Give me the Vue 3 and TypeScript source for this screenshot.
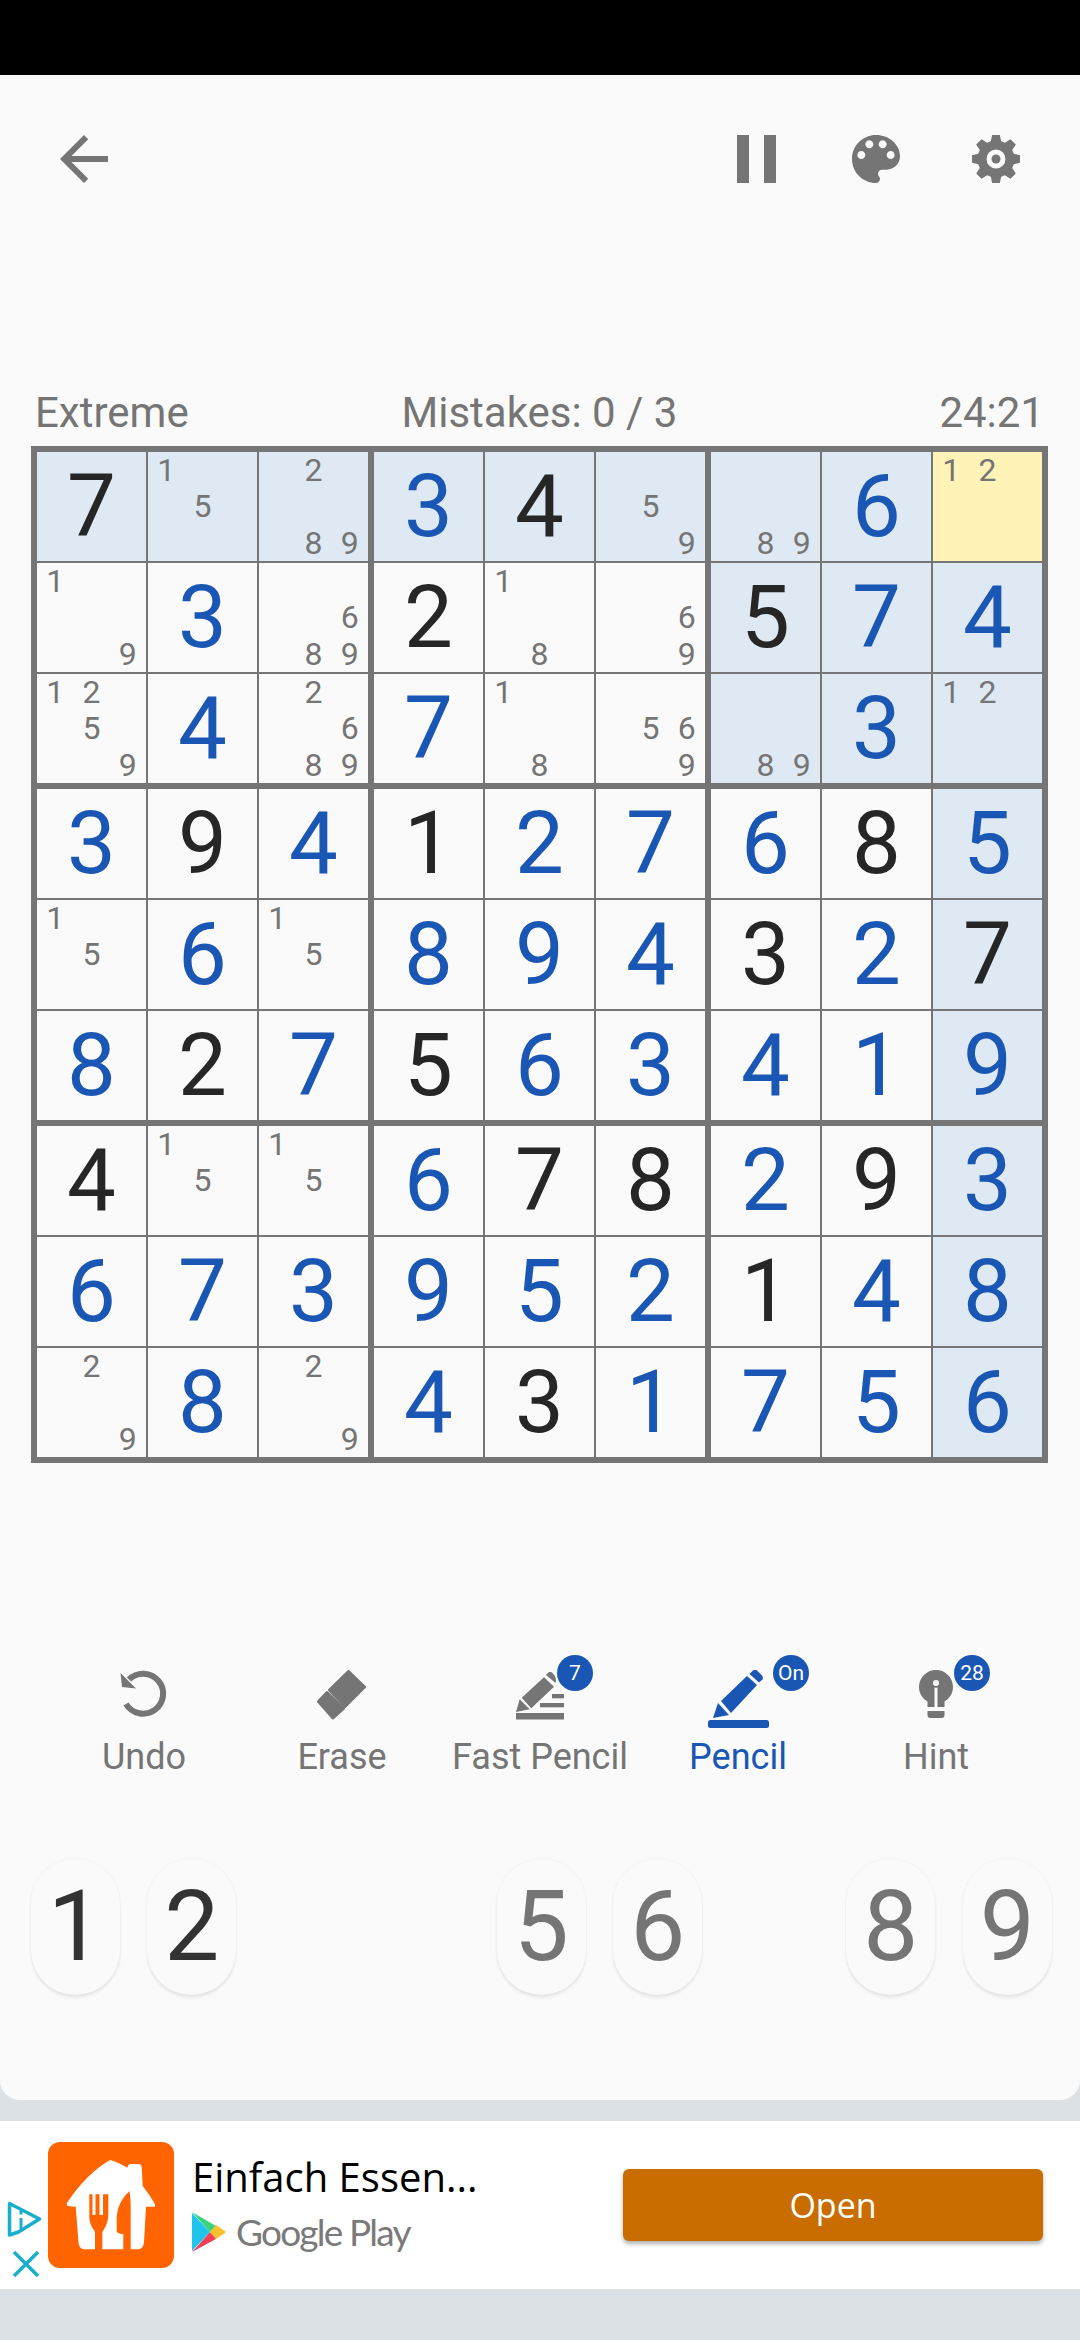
<script setup lang="ts">
const rows: (number | string | number[])[][] = [
  ['7', [1, 5], [2, 8, 9], 3, '4', [5, 9], [8, 9], 6, [1, 2]],
  [[1, 9], 3, [6, 8, 9], '2', [1, 8], [6, 9], '5', 7, 4],
  [[1, 2, 5, 9], 4, [2, 6, 8, 9], 7, [1, 8], [5, 6, 9], [8, 9], 3, [1, 2]],
  [3, '9', 4, '1', 2, 7, 6, '8', 5],
  [[1, 5], 6, [1, 5], 8, 9, 4, '3', 2, '7'],
  [8, '2', 7, '5', 6, 3, 4, 1, 9],
  ['4', [1, 5], [1, 5], 6, '7', '8', 2, '9', 3],
  [6, 7, 3, 9, 5, 2, '1', 4, 8],
  [[2, 9], 8, [2, 9], 4, '3', 1, 7, 5, 6],
]

function highlighted(r: number, c: number): boolean {
  return r < 3 ? c >= 6 || r === 0 : c === 8
}

const cells = rows.flatMap((row, r) =>
  row.map((v, c) => ({
    key: `${r}-${c}`,
    notes: Array.isArray(v) ? v : null,
    text: Array.isArray(v) ? '' : String(v),
    given: typeof v === 'string',
    hl: highlighted(r, c),
    selected: r === 0 && c === 8,
    thickRight: c === 2 || c === 5,
    thickBottom: r === 2 || r === 5,
    lastCol: c === 8,
    lastRow: r === 8,
  })),
)

const pad = [
  { n: 1, state: 'done' },
  { n: 2, state: 'done' },
  { n: 3, state: 'none' },
  { n: 4, state: 'none' },
  { n: 5, state: 'left' },
  { n: 6, state: 'left' },
  { n: 7, state: 'none' },
  { n: 8, state: 'left' },
  { n: 9, state: 'left' },
]

function gear(): string {
  const pts: string[] = []
  const n = 8
  for (let i = 0; i < n; i++) {
    const a = (i * 2 * Math.PI) / n - Math.PI / 2
    const step = (2 * Math.PI) / n
    const add = (r: number, d: number) =>
      pts.push(`${(24 + r * Math.cos(a + d)).toFixed(2)},${(24 + r * Math.sin(a + d)).toFixed(2)}`)
    add(18.5, -0.36 * step)
    add(24.5, -0.2 * step)
    add(24.5, 0.2 * step)
    add(18.5, 0.36 * step)
  }
  return pts.join(' ')
}
const gearPoints = gear()
</script>

<template>
  <div class="page">
    <div class="status"></div>
    <main class="game">
      <header class="top">
        <svg class="ic-back" viewBox="4 4 16 16"><path d="M20 11H7.83l5.59-5.59L12 4l-8 8 8 8 1.41-1.41L7.83 13H20v-2z" /></svg>
        <div class="top-right">
          <svg class="ic-pause" viewBox="0 0 39 48"><rect width="12" height="48" /><rect x="27" width="12" height="48" /></svg>
          <svg class="ic-sq" viewBox="3 3 18 18"><path d="M12 3c-4.97 0-9 4.03-9 9s4.03 9 9 9c.83 0 1.5-.67 1.5-1.5 0-.39-.15-.74-.39-1.01-.23-.26-.38-.61-.38-.99 0-.83.67-1.5 1.5-1.5H16c2.76 0 5-2.24 5-5 0-4.42-4.03-8-9-8zm-5.5 9c-.83 0-1.5-.67-1.5-1.5S5.67 9 6.5 9 8 9.67 8 10.5 7.33 12 6.5 12zm3-4C8.67 8 8 7.33 8 6.5S8.67 5 9.5 5s1.5.67 1.5 1.5S10.33 8 9.5 8zm5 0c-.83 0-1.5-.67-1.5-1.5S13.67 5 14.5 5s1.5.67 1.5 1.5S15.33 8 14.5 8zm3 4c-.83 0-1.5-.67-1.5-1.5S16.67 9 17.5 9s1.5.67 1.5 1.5-.67 1.5-1.5 1.5z" /></svg>
          <svg class="ic-sq" viewBox="0 0 48 48"><polygon :points="gearPoints" /><circle cx="24" cy="24" r="9.500" fill="#fafafa" /><circle cx="24" cy="24" r="4.500" /></svg>
        </div>
      </header>

      <div class="info">
        <span>Extreme</span>
        <span class="mistakes">Mistakes: 0 / 3</span>
        <span class="timer">24:21</span>
      </div>

      <div class="board">
        <div
          v-for="cell in cells"
          :key="cell.key"
          class="cell"
          :class="{ hl: cell.hl, sel: cell.selected, tr: cell.thickRight, tb: cell.thickBottom, lc: cell.lastCol, lr: cell.lastRow }"
        >
          <div v-if="cell.notes" class="notes">
            <span v-for="n in 9" :key="n">{{ cell.notes.includes(n) ? n : '' }}</span>
          </div>
          <span v-else class="val" :class="{ given: cell.given }">{{ cell.text }}</span>
        </div>
      </div>

      <div class="tools">
        <div class="tool">
          <div class="tool-icon">
            <svg width="48" height="50" viewBox="0 0 48 50" class="gray">
              <path d="M9 9.500A20 20 0 1 1 6 34" fill="none" stroke-width="6" class="st" />
              <polygon points="0.5,3 2,17 16,18.500" />
            </svg>
          </div>
          <span>Undo</span>
        </div>
        <div class="tool">
          <div class="tool-icon">
            <svg width="50" height="50" viewBox="0 0 50 50" class="gray">
              <polygon points="31.500,1.500 47.500,17 28,36.500 12.500,20" class="rj" />
              <polygon points="10,22.500 26.500,38.500 16,48 1.500,31.500" class="rj" />
            </svg>
          </div>
          <span>Erase</span>
        </div>
        <div class="tool">
          <div class="tool-icon">
            <svg class="fast gray" width="48" height="48" viewBox="0 0 48 48">
              <polygon points="0,40 3.700,27.300 13.700,37.300" />
              <polygon points="5.700,25.700 28,5.300 38,14.700 15.300,36.300" />
              <path d="M30 3l3-3q2-.5 3.500 1l2.500 3q1.500 3 .5 7z" />
              <rect x="0" y="41" width="48" height="6.500" />
              <rect x="36" y="22" width="12" height="4.300" />
              <rect x="24" y="31" width="24" height="4.300" />
            </svg>
            <i class="badge b-fast">7</i>
          </div>
          <span>Fast Pencil</span>
        </div>
        <div class="tool active">
          <div class="tool-icon">
            <svg width="61" height="58" viewBox="0 0 61 58">
              <polygon points="5,48 10,33 21,45" />
              <polygon points="13,31 39,6 49,15 23,43" />
              <path d="M41.500 4l3.500-3.500q2-1.500 4 0l5 5q1.500 2 .5 4l-3.500 3z" />
              <rect x="0" y="50" width="61" height="8" rx="2.500" />
            </svg>
            <i class="badge b-pencil">On</i>
          </div>
          <span>Pencil</span>
        </div>
        <div class="tool">
          <div class="tool-icon">
            <svg width="34" height="48" viewBox="0 0 34 48" class="gray">
              <path fill-rule="evenodd" d="M17 0C7.600 0 0 7.600 0 17c0 6.500 3.500 11.500 8.500 14.500V37h7V17.500a3.500 3.500 0 0 0 3 0V37h7v-5.500C30.500 28.500 34 23.500 34 17 34 7.600 26.400 0 17 0zm0 10a3 3 0 1 1 0 6 3 3 0 0 1 0-6z" />
              <path d="M8.500 41h17v4q0 3-3 3h-11q-3 0-3-3z" />
            </svg>
            <i class="badge b-hint">28</i>
          </div>
          <span>Hint</span>
        </div>
      </div>

      <div class="pad">
        <div v-for="p in pad" :key="p.n" class="slot">
          <button v-if="p.state !== 'none'" class="key" :class="p.state">{{ p.n }}</button>
        </div>
      </div>
    </main>

    <aside class="ad">
      <div class="ad-marks">
        <svg width="36" height="38" viewBox="0 0 36 38" fill="none" stroke="#19aecb" stroke-width="3.500">
          <path d="M2.500 2.500l30 15.500-21 13-9 3z" stroke-linejoin="round" />
          <path d="M14 17v11M14 10v3.500" stroke-width="3" />
        </svg>
        <svg class="x" width="28" height="28" viewBox="0 0 28 28" fill="none" stroke="#19aecb" stroke-width="3.500">
          <path d="M2 2l24 24M26 2L2 26" />
        </svg>
      </div>
      <div class="logo">
        <svg width="126" height="126" viewBox="0 0 126 126">
          <path fill="#fff" d="M62 18Q70 20 79.300 25.700L80.300 23Q81 22 83 22L91 22.300Q93.700 22.500 93.700 25L94.700 44Q102 53 107 62.300L107 64.700 98 64.700 96 100Q95.500 107.300 90 107.300L36 107.300Q31 107.300 30.500 100L27.700 64.700 19.300 64 18.700 61.300Q38 32 62 18Z" />
          <path fill="#ff6400" d="M41.300 52.300L60.300 52.300 60.300 74Q60 82 54.300 90L54.300 108 47 108 47 90Q41.500 82 41.300 76Z" />
          <path fill="#fff" d="M44.500 51h3v22h-3zM51.500 51h3.500v22h-3.500z" />
          <path fill="#ff6400" d="M81.300 49Q82.700 55 82.700 65L82.700 108 75.300 108 75.300 92.300Q68.700 91.500 68.700 89L68.700 74Q70 60 81.300 49Z" />
        </svg>
      </div>
      <div class="ad-text">
        <div class="ad-title">Einfach Essen...</div>
        <div class="gp">
          <svg width="34" height="42" viewBox="0 0 34 42">
            <path fill="#1fc4ef" d="M0 2v38l18-19z" />
            <path fill="#3bd37f" d="M0 1l24 14-6 6z" />
            <path fill="#fbc02d" d="M24 14l9 6q1 1 0 2l-9 6-6-7z" />
            <path fill="#ef4259" d="M0 41l24-13-6-7z" />
          </svg>
          <span>Google Play</span>
        </div>
      </div>
      <div class="open-btn">Open</div>
    </aside>
  </div>
</template>

<style>
html, body { margin: 0; background: #dce1e5; }
</style>

<style scoped>
.page {
  width: 1080px;
  height: 2340px;
  display: flex;
  flex-direction: column;
  overflow: hidden;
  background: #dce1e5;
  font-family: Roboto, sans-serif;
}
.status { height: 75px; background: #000; flex: none; }
.game {
  height: 2025px;
  flex: none;
  background: #fafafa;
  border-radius: 0 0 20px 20px;
  padding: 60px 0 0;
  box-sizing: border-box;
}
.top {
  height: 48px;
  display: flex;
  justify-content: space-between;
  padding: 0 60px 0 60px;
  fill: #757575;
}
.top svg { display: block; height: 48px; }
.ic-back { width: 48px; }
.ic-pause { width: 39px; margin-right: 4px; }
.ic-sq { width: 48px; }
.top-right { display: flex; gap: 72px; align-items: center; }
.info {
  margin-top: 201px;
  padding: 0 36px 0 35px;
  height: 56px;
  display: grid;
  grid-template-columns: 1fr auto 1fr;
  align-items: center;
  font-size: 42px;
  color: #757575;
}
.timer { text-align: right; }
.board {
  margin: 6px 0 0 31px;
  width: 1017px;
  height: 1017px;
  box-sizing: border-box;
  border: 6px solid #757575;
  background: #757575;
  display: grid;
  grid-template-columns: repeat(9, auto);
  grid-template-rows: repeat(9, auto);
}
.cell {
  background: #fafafa;
  width: 109px;
  height: 109px;
  margin: 0 2px 2px 0;
  display: flex;
  align-items: center;
  justify-content: center;
  position: relative;
}
.cell.tr { margin-right: 6px; }
.cell.tb { margin-bottom: 6px; }
.cell.lc { margin-right: 0; }
.cell.lr { margin-bottom: 0; }
.cell.hl { background: #dfe9f3; }
.cell.sel { background: #fff3b8; }
.val { font-size: 87px; line-height: 1; color: #1a56b4; }
.val.given { color: #262626; }
.notes {
  position: absolute;
  inset: 0;
  display: grid;
  grid-template-columns: repeat(3, 1fr);
  grid-template-rows: repeat(3, 1fr);
  font-size: 32px;
  color: #757575;
  text-align: center;
  line-height: 36px;
}
.tools {
  margin-top: 207px;
  padding: 0 45px;
  display: grid;
  grid-template-columns: repeat(5, 198px);
}
.tool {
  display: flex;
  flex-direction: column;
  align-items: center;
  color: #757575;
  font-size: 36px;
  line-height: 40px;
}
.tool.active { color: #1a56b4; fill: #1a56b4; }
.tool-icon {
  position: relative;
  height: 58px;
  margin-bottom: 9px;
  display: flex;
  align-items: flex-start;
}
.tool-icon svg { display: block; }
.tool-icon .fast { margin-top: 2px; }
.gray { fill: #757575; }
.st { stroke: #757575; }
.rj { stroke: #757575; stroke-width: 3; stroke-linejoin: round; }
.badge {
  position: absolute;
  top: -15px;
  width: 36px;
  height: 36px;
  border-radius: 50%;
  background: #1a56b4;
  color: #fff;
  font-style: normal;
  font-size: 21px;
  line-height: 36px;
  text-align: center;
}
.b-fast { left: calc(50% + 17px); }
.b-pencil { left: calc(50% + 35px); }
.b-hint { left: calc(50% + 18px); }
.pad {
  margin-top: 82px;
  padding: 0 0 0 17px;
  display: grid;
  grid-template-columns: repeat(9, 116.500px);
}
.slot { height: 136px; display: flex; justify-content: center; }
.key {
  width: 89px;
  height: 136px;
  padding: 0;
  border: 0;
  border-radius: 45px;
  background: #fafafa;
  box-shadow: 0 3px 3px rgba(0, 0, 0, .07), 0 0 3px rgba(0, 0, 0, .05);
  font-family: inherit;
  font-size: 98px;
  line-height: 1;
}
.key.done { color: #333; }
.key.left { color: #757575; }
.ad {
  margin-top: 21px;
  height: 168px;
  flex: none;
  background: #fff;
  display: flex;
  align-items: center;
  position: relative;
}
.ad-marks {
  width: 48px;
  height: 168px;
  box-sizing: border-box;
  padding: 80px 0 0 7px;
  display: flex;
  flex-direction: column;
  gap: 11px;
}
.ad-marks svg { display: block; }
.ad-marks .x { margin-left: 5px; }
.logo {
  width: 126px;
  height: 126px;
  background: #ff6400;
  border-radius: 12px;
  flex: none;
}
.logo svg { display: block; }
.ad-text { margin-left: 18px; width: 400px; }
.ad-title {
  font-family: "Open Sans", sans-serif;
  font-size: 40px;
  line-height: 48px;
  color: #000;
  margin-top: -3px;
}
.gp {
  display: flex;
  align-items: center;
  gap: 10px;
  margin-top: 8px;
  color: #7a7a7a;
  font-family: Lato, sans-serif;
  font-size: 37px;
  letter-spacing: -1.800px;
}
.gp svg { display: block; }
.open-btn {
  position: absolute;
  left: 623px;
  top: 48px;
  width: 420px;
  height: 72px;
  background: #c96d00;
  color: #fff;
  border-radius: 6px;
  box-shadow: 0 3px 4px rgba(0, 0, 0, .3);
  font-family: "Open Sans", sans-serif;
  font-size: 34px;
  line-height: 72px;
  text-align: center;
}
</style>
